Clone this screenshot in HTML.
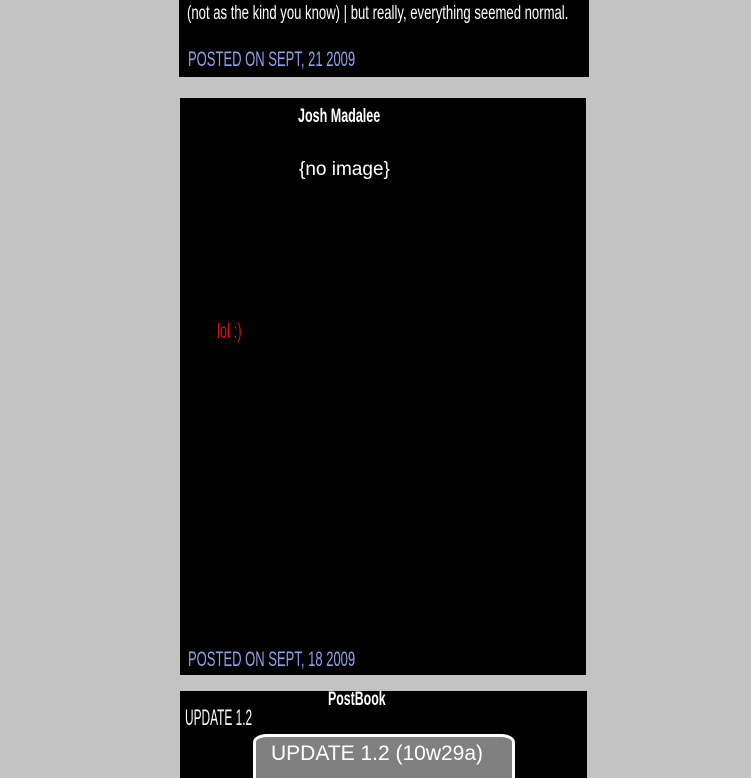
<!DOCTYPE html>
<html style="overflow:hidden"><head><style>
html,body{overflow:hidden}
body{margin:0;background:#c3c3c3;width:751px;height:778px;position:relative;font-family:"Liberation Sans",sans-serif}
.b{position:absolute;background:#000}
.t{position:absolute;white-space:nowrap;transform-origin:0 0;transform:scaleX(0.62)}
</style></head><body>
<div class="b" style="left:179px;top:0;width:410px;height:77px"></div>
<div class="b" style="left:180px;top:98px;width:406px;height:577px"></div>
<div class="b" style="left:180px;top:691px;width:407px;height:87px"></div>

<div class="t" style="left:187px;top:3px;color:#fff;font-size:19px;transform:scaleX(0.69)">(not as the kind you know) | but really, everything seemed normal.</div>
<div class="t" style="left:188px;top:48px;color:#8ea2e6;font-size:21px">POSTED ON SEPT, 21 2009</div>

<div class="t" style="left:298px;top:106px;color:#fff;font-size:19px;font-weight:bold;transform:scaleX(0.66)">Josh Madalee</div>
<div style="position:absolute;left:299px;top:159px;color:#fff;font-size:19px">{no image}</div>
<div class="t" style="left:217px;top:320px;color:#e01010;font-size:21px">lol :)</div>
<div class="t" style="left:188px;top:648px;color:#8ea2e6;font-size:21px">POSTED ON SEPT, 18 2009</div>

<div class="t" style="left:328px;top:689px;color:#fff;font-size:19px;font-weight:bold;transform:scaleX(0.65)">PostBook</div>
<div class="t" style="left:185px;top:705px;color:#fff;font-size:22px;transform:scaleX(0.54)">UPDATE 1.2</div>
<div style="position:absolute;left:253px;top:734px;width:256px;height:60px;background:#808080;border:3px solid #fff;border-radius:14px/8px"></div>
<div style="position:absolute;left:271px;top:742px;color:#fff;font-size:21px">UPDATE 1.2 (10w29a)</div>
</body></html>
